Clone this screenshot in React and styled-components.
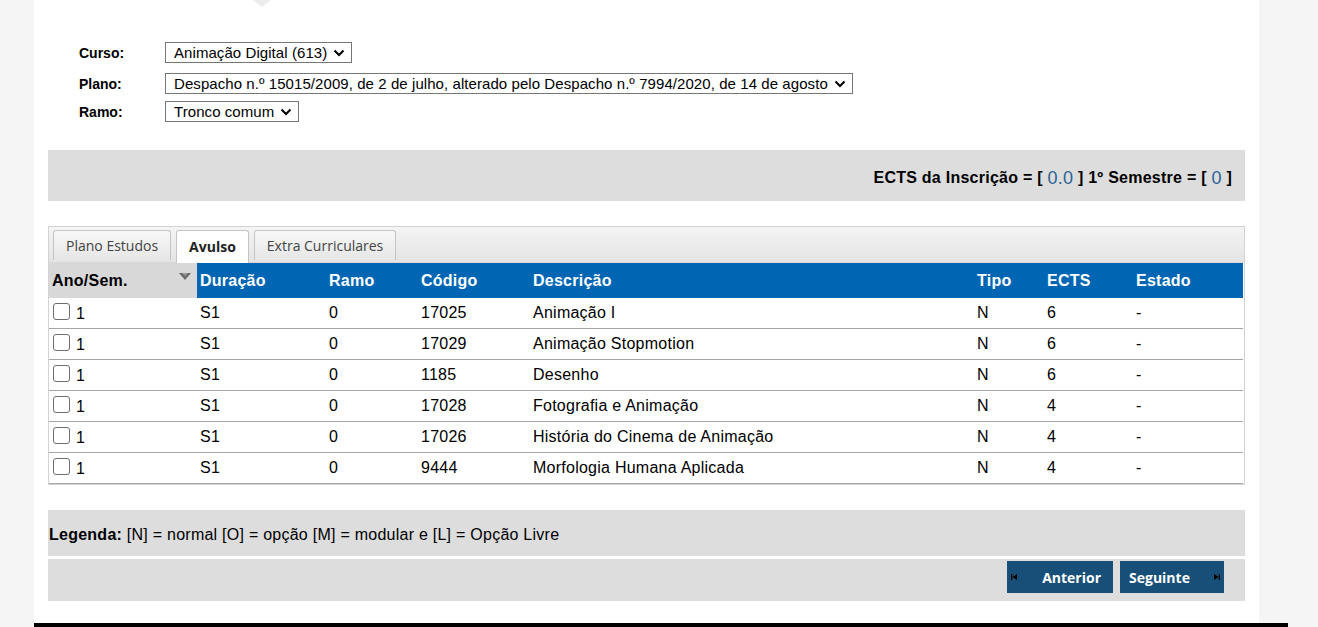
import React from 'react';
import styled, { createGlobalStyle } from 'styled-components';

const GlobalStyle = createGlobalStyle`
  html, body {
    margin: 0;
    padding: 0;
    background: #f5f5f5;
    font-family: "Liberation Sans", Arial, sans-serif;
    color: #000;
  }
`;

const Page = styled.div`
  width: 1318px;
  height: 627px;
  overflow: hidden;
`;

const Sheet = styled.div`
  margin-left: 34px;
  width: 1225px;
  background: #fff;
  padding: 0 14px 22px 14px;
  box-sizing: border-box;
`;

const Pointer = styled.div`
  width: 0;
  height: 0;
  margin-left: 205px;
  border-left: 9px solid transparent;
  border-right: 9px solid transparent;
  border-top: 7px solid #ececec;
`;

const Form = styled.div`
  margin: 35px 0 0 31px;
  display: grid;
  grid-template-columns: 86px auto;
  align-items: center;
  justify-items: start;
`;

const Label = styled.div`
  font-size: 14px;
  font-weight: bold;
  margin-bottom: ${(p) => p.$gap}px;
`;

const SelectBox = styled.div`
  display: inline-flex;
  align-items: center;
  height: 21px;
  box-sizing: border-box;
  border: 1px solid #767676;
  padding: 0 6px 0 8px;
  font-size: 15px;
  letter-spacing: 0.07px;
  color: #000;
  gap: 6px;
  margin-bottom: ${(p) => p.$gap}px;
`;

const Chevron = () => (
  <svg width="12" height="8" viewBox="0 0 12 8">
    <polyline points="1.5,1.5 6,6 10.5,1.5" fill="none" stroke="#000" strokeWidth="2" />
  </svg>
);

const EctsBar = styled.div`
  margin-top: 28px;
  height: 51px;
  background: #dddddd;
  display: flex;
  align-items: center;
  justify-content: flex-end;
  padding: 5px 13px 0 0;
  box-sizing: border-box;
  font-size: 16px;
  font-weight: bold;
  letter-spacing: 0.25px;
  white-space: pre;
`;

const Num = styled.span`
  color: #2a6496;
  font-weight: normal;
  font-size: 18px;
`;

const TabBox = styled.div`
  margin-top: 25px;
  border: 1px solid #d3d3d3;
`;

const TabStrip = styled.div`
  height: 36px;
  box-sizing: border-box;
  padding: 3px 4px 0 4px;
  display: flex;
  align-items: flex-start;
  gap: 5px;
  background: linear-gradient(#f4f4f4, #e4e4e4);
  border-bottom: 1px solid #d8d8d8;
`;

const Tab = styled.div`
  box-sizing: border-box;
  padding: 0 12px 1px 12px;
  display: flex;
  align-items: center;
  border: 1px solid #c5c5c5;
  border-bottom: none;
  border-radius: 3px 3px 0 0;
  font-family: "Open Sans", "Liberation Sans", sans-serif;
  font-size: 14px;
  color: ${(p) => (p.$active ? '#222' : '#444')};
  font-weight: ${(p) => (p.$active ? 'bold' : 'normal')};
  background: ${(p) => (p.$active ? '#fff' : 'linear-gradient(#f8f8f8, #e6e6e6)')};
  height: ${(p) => (p.$active ? '33px' : '30px')};
`;

const Table = styled.table`
  width: 1194px;
  border-collapse: collapse;
  table-layout: fixed;
  font-size: 16px;
  letter-spacing: 0.25px;
`;

const Th = styled.th`
  height: 35px;
  padding: 0 0 0 3px;
  text-align: left;
  font-weight: bold;
  color: ${(p) => (p.$sorted ? '#000' : '#fff')};
  background: ${(p) => (p.$sorted ? '#d8d8d8' : '#0066b3')};
  position: relative;
`;

const SortIcon = styled.svg`
  position: absolute;
  right: 6px;
  top: 10px;
`;

const Td = styled.td`
  height: 30px;
  padding: 0 0 0 3px;
  border-bottom: 1px solid #a6a6a6;
  white-space: nowrap;
`;

const Check = styled.input.attrs({ type: 'checkbox' })`
  appearance: none;
  width: 17px;
  height: 17px;
  margin: 0 6px 0 1px;
  border: 1px solid #6e6e6e;
  border-radius: 3px;
  background: #fff;
  vertical-align: -1px;
`;

const LegendBar = styled.div`
  margin-top: 25px;
  height: 46px;
  background: #dddddd;
  display: flex;
  align-items: center;
  padding: 4px 0 0 1px;
  box-sizing: border-box;
  font-size: 16px;
  letter-spacing: 0.25px;
`;

const ButtonBar = styled.div`
  margin-top: 3px;
  height: 42px;
  background: #dddddd;
  display: flex;
  justify-content: flex-end;
  align-items: flex-start;
  gap: 7px;
  padding: 2px 21px 0 0;
  box-sizing: border-box;
`;

const NavButton = styled.button`
  height: 32px;
  border: none;
  background: #174f78;
  color: #fff;
  font-family: "Open Sans", "Liberation Sans", sans-serif;
  font-weight: bold;
  font-size: 14px;
  display: flex;
  align-items: center;
  justify-content: space-between;
  padding: ${(p) => p.$pad};
  width: ${(p) => p.$w}px;
  box-sizing: border-box;
  cursor: pointer;
`;

const Footer = styled.div`
  margin-left: 34px;
  width: 1254px;
  height: 6px;
  background: #000;
`;

const FirstIcon = () => (
  <svg width="6" height="6" viewBox="0 0 6 6">
    <rect x="0" y="0" width="1.3" height="6" fill="#000" />
    <polygon points="6,0 6,6 1.5,3" fill="#000" />
  </svg>
);

const LastIcon = () => (
  <svg width="6" height="6" viewBox="0 0 6 6">
    <polygon points="0,0 0,6 4.5,3" fill="#000" />
    <rect x="4.7" y="0" width="1.3" height="6" fill="#000" />
  </svg>
);

const columns = [
  { key: 'ano', label: 'Ano/Sem.', width: 148 },
  { key: 'dur', label: 'Duração', width: 129 },
  { key: 'ramo', label: 'Ramo', width: 92 },
  { key: 'cod', label: 'Código', width: 112 },
  { key: 'desc', label: 'Descrição', width: 444 },
  { key: 'tipo', label: 'Tipo', width: 70 },
  { key: 'ects', label: 'ECTS', width: 89 },
  { key: 'estado', label: 'Estado', width: 110 },
];

const rows = [
  { cod: '17025', desc: 'Animação I', ects: 6 },
  { cod: '17029', desc: 'Animação Stopmotion', ects: 6 },
  { cod: '1185', desc: 'Desenho', ects: 6 },
  { cod: '17028', desc: 'Fotografia e Animação', ects: 4 },
  { cod: '17026', desc: 'História do Cinema de Animação', ects: 4 },
  { cod: '9444', desc: 'Morfologia Humana Aplicada', ects: 4 },
];

export default function App() {
  return (
    <Page>
      <GlobalStyle />
      <Sheet>
        <Pointer />
        <Form>
          <Label $gap={10}>Curso:</Label>
          <SelectBox $gap={10}>
            Animação Digital (613) <Chevron />
          </SelectBox>
          <Label $gap={7}>Plano:</Label>
          <SelectBox $gap={7}>
            Despacho n.º 15015/2009, de 2 de julho, alterado pelo Despacho n.º 7994/2020, de 14 de agosto <Chevron />
          </SelectBox>
          <Label $gap={0}>Ramo:</Label>
          <SelectBox $gap={0}>
            Tronco comum <Chevron />
          </SelectBox>
        </Form>

        <EctsBar>
          {'ECTS da Inscrição = [ '}
          <Num>0.0</Num>
          {' ] 1º Semestre = [ '}
          <Num>0</Num>
          {' ]'}
        </EctsBar>

        <TabBox>
          <TabStrip>
            <Tab>Plano Estudos</Tab>
            <Tab $active>Avulso</Tab>
            <Tab>Extra Curriculares</Tab>
          </TabStrip>
          <Table>
            <colgroup>
              {columns.map((c) => (
                <col key={c.key} style={{ width: c.width }} />
              ))}
            </colgroup>
            <thead>
              <tr>
                {columns.map((c, i) => (
                  <Th key={c.key} $sorted={i === 0}>
                    {c.label}
                    {i === 0 && (
                      <SortIcon width="12" height="8" viewBox="0 0 12 8">
                        <polygon points="0,0 12,0 6,7" fill="#6a6a6a" />
                        <polygon points="3,0 9,0 6,3" fill="#9a9a9a" />
                      </SortIcon>
                    )}
                  </Th>
                ))}
              </tr>
            </thead>
            <tbody>
              {rows.map((r) => (
                <tr key={r.cod}>
                  <Td>
                    <Check />1
                  </Td>
                  <Td>S1</Td>
                  <Td>0</Td>
                  <Td>{r.cod}</Td>
                  <Td>{r.desc}</Td>
                  <Td>N</Td>
                  <Td>{r.ects}</Td>
                  <Td>-</Td>
                </tr>
              ))}
            </tbody>
          </Table>
        </TabBox>

        <LegendBar>
          <b>Legenda:</b>&nbsp;[N] = normal [O] = opção [M] = modular e [L] = Opção Livre
        </LegendBar>

        <ButtonBar>
          <NavButton $w={106} $pad="0 12px 0 4px">
            <FirstIcon />
            Anterior
          </NavButton>
          <NavButton $w={104} $pad="0 4px 0 9px">
            Seguinte
            <LastIcon />
          </NavButton>
        </ButtonBar>
      </Sheet>
      <Footer />
    </Page>
  );
}
